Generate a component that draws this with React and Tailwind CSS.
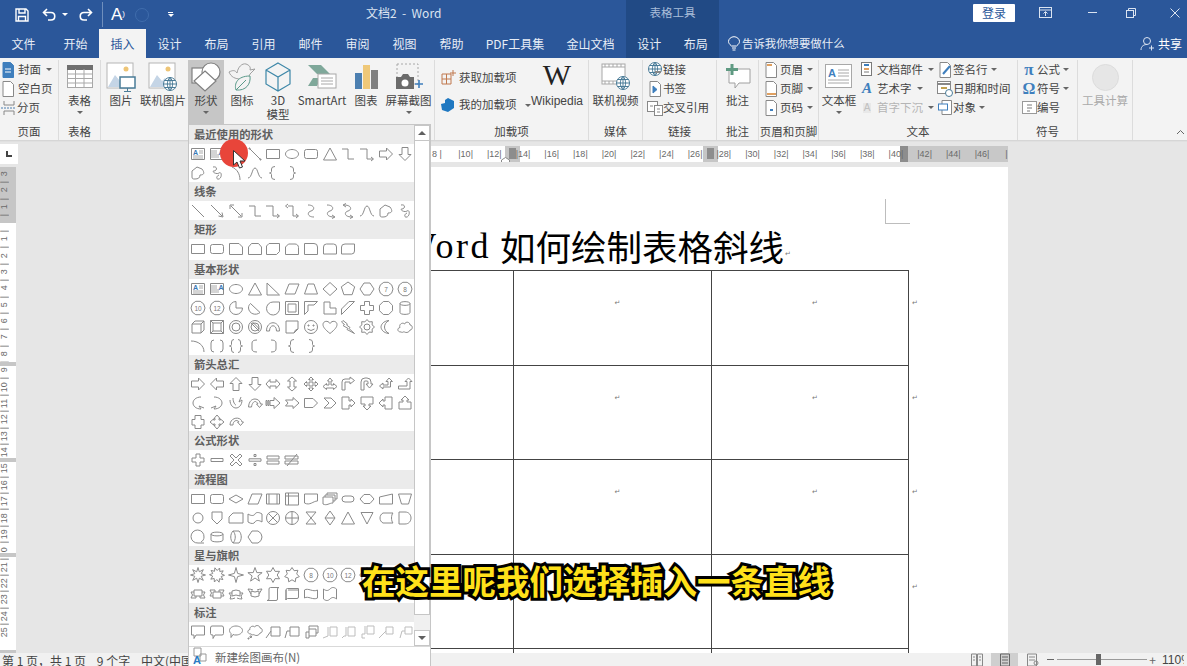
import React from 'react';

const pt = (n, ro, ri, rot = -90) => {
    const out = [];
    const count = ri ? n * 2 : n;
    for (let i = 0; i < count; i++) {
        const r = ri && i % 2 ? ri : ro;
        const a = ((rot + (360 / count) * i) * Math.PI) / 180;
        out.push(`${(8 + r * Math.cos(a)).toFixed(1)} ${(8 + r * Math.sin(a)).toFixed(1)}`);
    }
    return `M${out.join('L')}Z`;
};

const CIRCLE = 'M14.5 8A6.5 6.5 0 1 1 1.5 8A6.5 6.5 0 1 1 14.5 8Z';
const RECT = 'M1.5 3.5H14.5V12.5H1.5Z';

const S = {
    line: 'M2 2L14 14',
    arrow: 'M2 2L13 13M9.5 13L14 14L13 9.5',
    dbl: 'M3 3L13 13M2 6L2 2L6 2M10 14L14 14L14 10',
    dotline: 'M3 3L13 13M2 2h1v1h-1zM13 13h1v1h-1z',
    elbow: 'M2 3H8V13H14',
    elbowA: 'M1 3H8V13H14M12 11L14.5 13L12 15',
    elbowD: 'M4 3H9V13H14M4 1L1.5 3L4 5M12 11L14.5 13L12 15',
    curveC: 'M5 2C12 2 12 7 8 8C4 9 4 14 11 14',
    curveA: 'M5 2C12 2 12 7 8 8C4 9 4 14 12 14M10 12L13 14L10 15.5',
    curveD: 'M4 2C12 2 12 7 8 8C4 9 4 14 12 14M10 12L13 14L10 15.5M6 0.5L3 2L6 4',
    bell: 'M1 13C5 13 5 3 8 3S11 13 15 13',
    curve: 'M4 2C9 4 12 9 12 15',
    sCurve: 'M1 13C5 13 5 3 8 3S11 13 15 13',
    free: 'M2 12V6L7 2L12 4C15 8 14 10 10 10C10 13 8 14 5 14C3 14 2 14 2 12Z',
    scribble: 'M4 2C9 1 8 6 5 6S7 10 10 8S13 13 10 14S7 11 10 10',
    rect: RECT,
    round: 'M3.5 3.5H12.5Q14.5 3.5 14.5 5.5V10.5Q14.5 12.5 12.5 12.5H3.5Q1.5 12.5 1.5 10.5V5.5Q1.5 3.5 3.5 3.5Z',
    snip1: 'M1.5 2.5H11L14.5 6V13.5H1.5Z',
    snip2: 'M4.5 2.5H11.5L14.5 6V13.5H1.5V6Z',
    snipd: 'M4 2.5H14.5V10.5L11.5 13.5H1.5V5Z',
    sniprnd: 'M1.5 13.5V6L4.5 3H11C13 3 14.5 4.5 14.5 6.5V13.5Z',
    rnd1: 'M1.5 2.5H11Q14.5 2.5 14.5 6V13.5H1.5Z',
    rnd2: 'M4.5 3H11.5Q14.5 3 14.5 6V13H1.5V6Q1.5 3 4.5 3Z',
    rndd: 'M5 3H14.5V10Q14.5 13 11.5 13H1.5V6Q1.5 3 5 3Z',
    ellipse: 'M14.5 8C14.5 10.5 11.5 12.5 8 12.5S1.5 10.5 1.5 8S4.5 3.5 8 3.5S14.5 5.5 14.5 8Z',
    tri: 'M8 2L14.5 14H1.5Z',
    rtri: 'M2 2V14H14.5Z',
    para: 'M5 3H15L11 13H1Z',
    trap: 'M5 3H11L14.5 13H1.5Z',
    diamond: 'M8 1.5L15 8L8 14.5L1 8Z',
    pent: pt(5, 7),
    hex: 'M5 2H11L15 8L11 14H5L1 8Z',
    hept: pt(7, 7),
    oct: pt(8, 7, 0, -67.5),
    pie: 'M8 8V1.5A6.5 6.5 0 1 0 14.5 8Z',
    chord: 'M3.5 3.5L13 12.5C9 16 2 14 1.5 8C1.5 6 2 5 3.5 3.5Z',
    tear: 'M8 2H14.5V8A6.5 6.5 0 1 1 8 2Z',
    frame: 'M1.5 1.5H14.5V14.5H1.5ZM4 4H12V12H4Z',
    half: 'M1.5 1.5H14.5L11 5H5V11L1.5 14.5Z',
    lsh: 'M2 2H8V8H14V14H2Z',
    diag: 'M1.5 14.5V9L9 1.5H14.5Z',
    plus: 'M5.5 1.5H10.5V5.5H14.5V10.5H10.5V14.5H5.5V10.5H1.5V5.5H5.5Z',
    can: 'M3 3.5C3 1 13 1 13 3.5V12.5C13 15 3 15 3 12.5ZM3 3.5C3 6 13 6 13 3.5',
    cube: 'M2 5L5 2H14V11L11 14H2ZM2 5H11V14M11 5L14 2',
    bevel: 'M1.5 1.5H14.5V14.5H1.5ZM4 4H12V12H4ZM1.5 1.5L4 4M14.5 1.5L12 4M1.5 14.5L4 12M14.5 14.5L12 12',
    donut: `${CIRCLE}M12 8A4 4 0 1 1 4 8A4 4 0 1 1 12 8Z`,
    nosmoke: `${CIRCLE}M12 8A4 4 0 1 1 4 8A4 4 0 1 1 12 8ZM4 4L12 12M5.5 3L13 10.5`,
    barc: 'M1.5 12C1.5 1 14.5 1 14.5 12H11.5C11.5 5 4.5 5 4.5 12Z',
    fold: 'M2 2H14V10L10 14H2ZM14 10Q11 10 10 14',
    smile: `${CIRCLE}M5 6h1v1h-1zM10 6h1v1h-1zM4.5 10Q8 13 11.5 10`,
    heart: 'M8 14.5C3 10.5 1 8 1 5.5C1 2 6 1 8 4.5C10 1 15 2 15 5.5C15 8 13 10.5 8 14.5Z',
    bolt: 'M3 1.5L7.5 5L6.5 6L10 8.5L9 9.5L14.5 14.5L7 10.5L8 9.5L3 6.5L4.5 5.5L1.5 3Z',
    sun: `${pt(8, 7.5, 5.5)}M11 8A3 3 0 1 1 5 8A3 3 0 1 1 11 8Z`,
    moon: 'M11 1.5C5 2 3 6 3 8S5 14 11 14.5C8 13 6.5 10.5 6.5 8S8 3 11 1.5Z',
    cloud: 'M4 13C0 13 0 9 3 8.5C1.5 5 6 3 7.5 5C9 2 13 3 13 6C16 6 16 11 13 11C12 14 8 14 7 12.5C6 13.5 5 13.5 4 13Z',
    arc: 'M1 3C8 3 14 7 14 14',
    dbrk: 'M5 2Q2 2 2 5V11Q2 14 5 14M11 2Q14 2 14 5V11Q14 14 11 14',
    dbrc: 'M6 1.5Q3.5 1.5 3.5 4V6.5Q3.5 8 1.5 8Q3.5 8 3.5 9.5V12Q3.5 14.5 6 14.5M10 1.5Q12.5 1.5 12.5 4V6.5Q12.5 8 14.5 8Q12.5 8 12.5 9.5V12Q12.5 14.5 10 14.5',
    lbrk: 'M10 2Q5 2 5 5V11Q5 14 10 14',
    rbrk: 'M6 2Q11 2 11 5V11Q11 14 6 14',
    lbrc: 'M10 1.5Q6.5 1.5 6.5 4V6.5Q6.5 8 4.5 8Q6.5 8 6.5 9.5V12Q6.5 14.5 10 14.5',
    rbrc: 'M6 1.5Q9.5 1.5 9.5 4V6.5Q9.5 8 11.5 8Q9.5 8 9.5 9.5V12Q9.5 14.5 6 14.5',
    right: 'M1.5 5H8.5V2L14.5 8L8.5 14V11H1.5Z',
    left: 'M14.5 5H7.5V2L1.5 8L7.5 14V11H14.5Z',
    up: 'M5 14.5V7.5H2L8 1.5L14 7.5H11V14.5Z',
    down: 'M5 1.5V8.5H2L8 14.5L14 8.5H11V1.5Z',
    lr: 'M1 8L5 3.5V6H11V3.5L15 8L11 12.5V10H5V12.5Z',
    ud: 'M8 1L12.5 5H10V11H12.5L8 15L3.5 11H6V5H3.5Z',
    quad: 'M8 1L10.5 3.5H9V7H12.5V5.5L15 8L12.5 10.5V9H9V12.5H10.5L8 15L5.5 12.5H7V9H3.5V10.5L1 8L3.5 5.5V7H7V3.5H5.5Z',
    lru: 'M8 2L10.5 5H9V9H11.5V7.5L15 10.5L11.5 13.5V12H4.5V13.5L1 10.5L4.5 7.5V9H7V5H5.5Z',
    bent: 'M2 14V6Q2 3 5 3H10V1L14.5 4.5L10 8V6H5V14Z',
    uturn: 'M2 14V6Q2 2 6 2H8Q12 2 12 6V8H14L10.5 12L7 8H9V6Q9 5 8 5H6Q5 5 5 6V14Z',
    lup: 'M11 2L14.5 5.5H12.5V11H5V13L1.5 10L5 7V9H10V5.5H8Z',
    bup: 'M11.5 2L15 5.5H13V13H1.5V10H10V5.5H8Z',
    cright: 'M11 2C6 2 3 5 3 8S6 14 11 14L9 11L14 13',
    cleft: 'M5 2C10 2 13 5 13 8S10 14 5 14L7 11L2 13',
    cup: 'M2 5C2 10 5 13 8 13S14 10 14 5L11 7L13 2M5 3C5 7 7 10 8 10',
    cdown: 'M1.5 12C2 6 5 4 8 4S13 6 13.5 9H15.5L12.5 12.5L9.5 9H11C10 7 9 6.5 8 6.5S5 8 4.5 12Z',
    stripe: 'M1 5.5H2V10.5H1ZM3 5.5H4V10.5H3ZM5 5.5H9V2.5L15 8L9 13.5V10.5H5Z',
    notch: 'M1.5 5H9V2.5L15 8L9 13.5V11H1.5L4 8Z',
    home: 'M1.5 3.5H10L14.5 8L10 12.5H1.5Z',
    chev: 'M2 3H9L14 8L9 13H2L7 8Z',
    rcall: 'M2 2H9V6H11V4L15 8L11 12V10H9V14H2Z',
    dcall: 'M2 2H14V9H10V11H12L8 15L4 11H6V9H2Z',
    lcall: 'M14 2H7V6H5V4L1 8L5 12V10H7V14H14Z',
    ucall: 'M2 14H14V7H10V5H12L8 1L4 5H6V7H2Z',
    lrcall: 'M5 1.5H11V5.5H14V11H11V14.5H5V11H2V5.5H5Z',
    qcall: 'M8 1L11 4.5H10V6H11.5V5L15 8L11.5 11V10H10V11.5H11L8 15L5 11.5H6V10H4.5V11L1 8L4.5 5V6H6V4.5H5Z',
    circ: 'M2 11C2 3 13 2 14 8H15.5L12.5 11.5L9.5 8H11C10 5.5 5 6 5 11Z',
    add: 'M6 2H10V6H14V10H10V14H6V10H2V6H6Z',
    minus: 'M2 6.5H14V9.5H2Z',
    mult: 'M4 2L8 6L12 2L14 4L10 8L14 12L12 14L8 10L4 14L2 12L6 8L2 4Z',
    div: 'M2 6.8H14V9.2H2ZM7 2.5H9V4.5H7ZM7 11.5H9V13.5H7Z',
    eq: 'M2 4H14V7H2ZM2 9H14V12H2Z',
    neq: 'M1 4H14V7H1ZM1 9H14V12H1ZM3 14L13 2',
    flat: 'M1 8L8 4L15 8L8 12Z',
    pred: 'M1.5 3H14.5V13H1.5ZM4 3V13M12 3V13',
    intern: 'M1.5 2H14.5V14H1.5ZM1.5 5H14.5M4.5 2V14',
    doc: 'M1.5 3H14.5V10C10 10 7 15 1.5 12Z',
    mdoc: 'M1 6H11V12C7 12 5 15 1 13ZM3 6V4H13V10H11M5 4V2H15V8H13',
    term: 'M5 5H11A3 3 0 0 1 11 11H5A3 3 0 0 1 5 5Z',
    prep: 'M5 3.5H11L15 8L11 12.5H5L1 8Z',
    minput: 'M1.5 6L14.5 3V13H1.5Z',
    mop: 'M1.5 3H14.5L11.5 13H4.5Z',
    conn: 'M13 8A5 5 0 1 1 3 8A5 5 0 1 1 13 8Z',
    off: 'M3 2H13V9L8 14L3 9Z',
    card: 'M5 3H15V13H1V7Z',
    tape: 'M1 4C4 6 7 6 8 4S12 2 15 4V12C12 10 9 10 8 12S4 14 1 12Z',
    sum: `${CIRCLE}M3.4 3.4L12.6 12.6M12.6 3.4L3.4 12.6`,
    or: `${CIRCLE}M8 1.5V14.5M1.5 8H14.5`,
    coll: 'M3 2H13L3 14H13Z',
    sort: 'M8 1L13 8L8 15L3 8ZM3 8H13',
    tridn: 'M2 2.5H14L8 14Z',
    stored: 'M5 3H15C13 5 13 11 15 13H5C1 11 1 5 5 3Z',
    delay: 'M2 2H8C16 2 16 14 8 14H2Z',
    seq: 'M14 14H8A6.5 6.5 0 1 1 14 8C14 10 13 12 11 13',
    disk: 'M2 5C2 2.5 14 2.5 14 5V11C14 13.5 2 13.5 2 11ZM2 5C2 7.5 14 7.5 14 5',
    direct: 'M5 2H11C14 5 14 11 11 14H5C2 11 2 5 5 2ZM5 2C8 5 8 11 5 14',
    display: 'M5 2H11Q15 4 15 8T11 14H5L1 8Z',
    exp1: pt(8, 7.5, 3.5),
    exp2: pt(10, 7.5, 4.5, -70),
    s4: pt(4, 7.5, 2.2),
    s5: pt(5, 7.5, 3),
    s6: pt(6, 7.5, 4.2),
    s7: pt(7, 7.5, 4.8),
    s8: pt(8, 7.5, 5.5),
    rib1: 'M4 4H12V10H4ZM4 6H1L2.5 9L1 12H6V10M12 6H15L13.5 9L15 12H10V10',
    rib2: 'M4 6H12V12H4ZM4 10H1L2.5 7L1 4H6V6M12 10H15L13.5 7L15 4H10V6',
    crib1: 'M4 5Q8 3 12 5V10Q8 8 4 10ZM4 7H1L3 10L2 13Q5 13 7 12M12 7H15L13 10L14 13Q11 13 9 12',
    crib2: 'M4 10Q8 12 12 10V5Q8 7 4 5ZM4 8L1 3Q4 3 6 4M12 8L15 3Q12 3 10 4',
    vscr: 'M4 3Q4 1.5 5.5 1.5H14Q12.5 1.5 12.5 3V13Q12.5 14.5 11 14.5H2Q4 14.5 4 13Z',
    hscr: 'M2 4Q2 2.5 3.5 2.5H14.5V11Q14.5 12.5 13 12.5H3.5Q2 12.5 2 14ZM2 4V14M4 4H14.5',
    wave: 'M1.5 4C5 1.5 10 6.5 14.5 4V12C10 14.5 5 9.5 1.5 12Z',
    dwave: 'M1.5 3C4 5 6 5 8 3S12 1 14.5 3V13C12 11 10 11 8 13S4 15 1.5 13Z',
    c1: 'M1.5 2H14.5V11H6L4 14.5V11H1.5Z',
    c2: 'M3 2H13Q14.5 2 14.5 4V9.5Q14.5 11 13 11H6L4 14.5V11H3Q1.5 11 1.5 9.5V4Q1.5 2 3 2Z',
    c3: 'M14.5 6.5C14.5 9 11.5 11 8 11C7 11 6 11 5 10.5L3 13.5V9.5C2 8.7 1.5 7.5 1.5 6.5C1.5 4 4.5 2 8 2S14.5 4 14.5 6.5Z',
    c4: 'M4 10C0 10 0 6 3 5.5C2 3 6 1 7.5 3C9 0.5 13 1.5 13 4C16 4 16 9 13 9C12 12 8 12 7 10.5C6 11 5 11 4 10ZM3 12h1.5v1.5h-1.5zM1 14h1v1h-1z',
    l1: 'M6 3H15V12H6ZM6 7L1 14',
    l2: 'M6 3H15V12H6ZM6 7H3L1 14',
    l3: 'M6 5H13V12H6ZM6 5V2H15V9H13M6 12V14H3V8H6',
    l4: 'M8 3H15V12H8ZM6 3V12L1 14',
    l5: 'M8 3H15V12H8ZM6 3V12H4L2 14',
    l6: 'M8 2H15V10H8ZM6 2V10H3V14H6',
    l7: 'M8 3H15V10H8ZM8 7L1 14',
    l8: 'M8 3H15V10H8ZM8 7H5L3 14',
};

const FADED = ['l4', 'l5', 'l6', 'l7', 'l8'];

function Shape({ name }) {
    if (name === 'tb' || name === 'vtb') {
        return (
            <svg width="16" height="16" viewBox="0 0 16 16" fill="none" stroke="#8a8a8a">
                <path d="M1.5 2.5H14.5V13.5H1.5Z" />
                {name === 'tb' ? (
                    <path d="M9 5H13M9 7H13M3 10H13M3 12H13" stroke="#aaaaaa" />
                ) : (
                    <path d="M3 4V12M5 4V12M7 4V12M9 8V12" stroke="#aaaaaa" />
                )}
                <text x={name === 'tb' ? 3 : 9.5} y="8.5" fontSize="7" fontWeight="700" fill="#3b78b5" stroke="none" fontFamily="Liberation Sans">A</text>
            </svg>
        );
    }
    if (/^n\d+$/.test(name)) {
        return (
            <svg width="16" height="16" viewBox="0 0 16 16" fill="none" stroke="#8a8a8a">
                <path d={pt(10, 7, 0, -72)} />
                <text x="8" y="10.5" fontSize="6.5" textAnchor="middle" fill="#777777" stroke="none" fontFamily="Liberation Sans">{name.slice(1)}</text>
            </svg>
        );
    }
    return (
        <svg width="16" height="16" viewBox="0 0 16 16" fill="none" stroke={FADED.includes(name) ? '#bdbdbd' : '#8a8a8a'} strokeWidth="1">
            <path d={S[name]} />
        </svg>
    );
}

const SECTIONS = [
    { title: '最近使用的形状', rows: ['tb vtb line dotline rect ellipse round tri elbow elbowA right down', 'free scribble curve sCurve lbrc rbrc'], extra: '' },
    { title: '线条', rows: ['line arrow dbl elbow elbowA elbowD curveC curveA curveD bell free scribble'], extra: '' },
    { title: '矩形', rows: ['rect round snip1 snip2 snipd sniprnd rnd1 rnd2 rndd'], extra: 'pb-[2px]' },
    { title: '基本形状', rows: ['tb vtb ellipse tri rtri para trap diamond pent hex n7 n8', 'n10 n12 pie chord tear frame half lsh diag plus oct can', 'cube bevel donut nosmoke barc fold smile heart bolt sun moon cloud', 'arc dbrk dbrc lbrk rbrk lbrc rbrc'], extra: '' },
    { title: '箭头总汇', rows: ['right left up down lr ud quad lru bent uturn lup bup', 'cright cleft cup cdown stripe notch home chev rcall dcall lcall ucall', 'lrcall qcall circ'], extra: '' },
    { title: '公式形状', rows: ['add minus mult div eq neq'], extra: 'pb-[1px]' },
    { title: '流程图', rows: ['rect round flat para pred intern doc mdoc term prep minput mop', 'conn off card tape sum or coll sort tri tridn stored delay', 'seq disk direct display'], extra: '' },
    { title: '星与旗帜', rows: ['exp1 exp2 s4 s5 s6 s7 n8 n10 n12 s8', 'rib1 rib2 crib1 crib2 vscr hscr wave dwave'], extra: '' },
    { title: '标注', rows: ['c1 c2 c3 c4 l1 l2 l3 l4 l5 l6 l7 l8'], extra: '' },
];

function ShapesMenu() {
    return (
        <div className="absolute left-[188px] top-[124px] w-[243px] h-[542px] bg-white border-l border-t border-r border-[#c6c6c6] flex flex-col z-20">
            <div className="flex h-[521px]">
                <div className="w-[226px]">
                    {SECTIONS.map((sec) => (
                        <div key={sec.title} className={sec.extra}>
                            <div className="h-[19px] bg-[#ebebeb] pl-[5px] text-[11.3px] leading-[18px] font-bold text-[#5f5f5f]">{sec.title}</div>
                            {sec.rows.map((row, i) => (
                                <div key={i} className="flex h-[19px]">
                                    {row.split(' ').map((n, j) => (
                                        <div key={j} className="w-[18.75px] h-[19px] flex items-center justify-center">
                                            <Shape name={n} />
                                        </div>
                                    ))}
                                </div>
                            ))}
                        </div>
                    ))}
                </div>
                <div className="w-[16px] flex flex-col bg-[#f0f0f0]">
                    <div className="h-[16px] bg-white border border-[#c6c6c6] flex items-center justify-center">
                        <div className="w-0 h-0 border-l-[4px] border-r-[4px] border-b-[4px] border-l-transparent border-r-transparent border-b-[#606060]" />
                    </div>
                    <div className="h-[474px] bg-white border-x border-b border-[#c6c6c6]" />
                    <div className="flex-1" />
                    <div className="h-[16px] bg-white border border-[#c6c6c6] flex items-center justify-center">
                        <div className="w-0 h-0 border-l-[4px] border-r-[4px] border-t-[4px] border-l-transparent border-r-transparent border-t-[#606060]" />
                    </div>
                </div>
            </div>
            <div className="flex-1 border-t border-[#d9d9d9] flex items-center pl-[3px] gap-[7px] bg-white">
                <svg width="16" height="18" viewBox="0 0 16 18" fill="none">
                    <path d="M2 1H9V9H2Z" stroke="#999999" />
                    <path d="M8 7H14V14H8Z" stroke="#999999" />
                    <text x="1" y="17" fontSize="11" fontWeight="700" fill="#2b7cc4" fontFamily="Liberation Sans">A</text>
                </svg>
                <span className="text-[11.5px] text-[#666666] mt-[2px]">新建绘图画布(N)</span>
            </div>
        </div>
    );
}

const Caret = ({ c = '#666666' }) => (
    <span className="inline-block w-0 h-0 border-l-[3px] border-r-[3px] border-t-[3px] border-l-transparent border-r-transparent" style={{ borderTopColor: c }} />
);

function Group({ w, label, children }) {
    return (
        <div className={`${w} h-[80px] mt-[2px] border-r border-[#dcdcdc] flex flex-col shrink-0`}>
            <div className="h-[64px] flex">{children}</div>
            <div className="h-[15px] text-center text-[11.5px] leading-[15px] whitespace-nowrap text-[#444444]">{label}</div>
        </div>
    );
}

function Big({ w, icon, children, caret, active, gray }) {
    return (
        <div className={`${w} h-[64px] pt-[1px] flex flex-col items-center shrink-0 text-[11.5px] leading-[14px] ${gray ? 'text-[#aaaaaa]' : 'text-[#444444]'} ${active ? 'bg-[#c6c6c6]' : ''}`}>
            <div className="h-[32px] flex items-center justify-center">{icon}</div>
            <div className="text-center whitespace-nowrap">{children}</div>
            {caret && <div className="mt-[4px] leading-[3px] flex"><Caret /></div>}
        </div>
    );
}

function Small({ icon, children, caret, gray, gap = 'gap-[3px]' }) {
    return (
        <div className={`h-[19px] flex items-center ${gap} whitespace-nowrap text-[11.5px] ${gray ? 'text-[#b5b5b5]' : 'text-[#444444]'}`}>
            <span className="w-[16px] h-[16px] flex items-center justify-center shrink-0">{icon}</span>
            <span>{children}</span>
            {caret && <span className="ml-[3px] flex"><Caret /></span>}
        </div>
    );
}

const Page = ({ fill = '#ffffff', stroke = '#888888', children }) => (
    <svg width="14" height="16" viewBox="0 0 14 16" fill={fill} stroke={stroke}>
        <path d="M2 .5H9.5L12.5 3.5V15.5H2Z" />
        {children}
    </svg>
);

const Picture = ({ children }) => (
    <svg width="30" height="30" viewBox="0 0 30 30">
        <rect x="1" y="1" width="26" height="25" fill="#ffffff" stroke="#b5b5b5" />
        <circle cx="20" cy="7" r="2.5" fill="#eec576" />
        <path d="M2 25L9 13L14 19L17 16L22 25Z" fill="#c5d5e6" />
        {children}
    </svg>
);

const Globe = ({ x = 0, y = 0 }) => (
    <g transform={`translate(${x} ${y})`} fill="#ffffff" stroke="#4a7c98">
        <circle cx="7" cy="7" r="6.5" />
        <path d="M.5 7H13.5M1.5 3.5H12.5M1.5 10.5H12.5M7 .5V13.5M7 .5C3.5 4 3.5 10 7 13.5M7 .5C10.5 4 10.5 10 7 13.5" fill="none" />
    </g>
);

function Ribbon() {
    return (
        <div className="h-[83px] bg-[#f3f3f3] border-b border-[#d6d6d6] flex relative">
            <Group w="w-[59px]" label="页面">
                <div className="flex flex-col">
                    <Small gap="gap-[2px]" caret icon={<Page fill="#3f7fbd" stroke="#3f7fbd"><path d="M4 7H10M4 10H10" stroke="#ffffff" /></Page>}>封面</Small>
                    <Small gap="gap-[2px]" icon={<Page />}>空白页</Small>
                    <Small gap="gap-[1px]" icon={
                        <svg width="16" height="16" viewBox="0 0 16 16" fill="none" stroke="#888888"><path d="M4 1V5H14V1M4 15V11H14V15" /><path d="M1 8H15" stroke="#4a7cae" strokeDasharray="2 1" /></svg>
                    }>分页</Small>
                </div>
            </Group>
            <Group w="w-[42px]" label="表格">
                <Big w="w-[41px]" caret icon={
                    <svg width="26" height="24" viewBox="0 0 26 24" fill="#ffffff" stroke="#a8a8a8">
                        <rect x=".5" y=".5" width="25" height="22" />
                        <rect x=".5" y=".5" width="25" height="4" fill="#6f6f6f" stroke="#6f6f6f" />
                        <path d="M.5 9H25.5M.5 13.5H25.5M.5 18H25.5M8.5 4V22M17 4V22" fill="none" />
                    </svg>
                }>表格</Big>
            </Group>
            <Group w="w-[334px]" label="插图">
                <div className="w-[3px]" />
                <Big w="w-[34px]" icon={<Picture><rect x="14" y="15" width="15" height="11" fill="#ffffff" stroke="#4a7c98" strokeWidth="1.5" /><path d="M21.5 26V29M18 29.5H25" stroke="#4a7c98" /></Picture>}>图片</Big>
                <Big w="w-[50px]" icon={<Picture><Globe x="15" y="15" /></Picture>}>联机图片</Big>
                <Big w="w-[36px]" active caret icon={
                    <svg width="30" height="30" viewBox="0 0 30 30" fill="#ffffff" stroke="#808080" strokeWidth="1.2">
                        <rect x="1" y="6" width="17" height="15" />
                        <circle cx="20" cy="10" r="9" />
                        <path d="M14 9L25 19L14 29L3 19Z" />
                    </svg>
                }>形状</Big>
                <Big w="w-[36px]" icon={
                    <svg width="28" height="30" viewBox="0 0 28 30" fill="none" stroke="#a0a0a0">
                        <path d="M1 10C5 8 7 8 9 11C10 5 14 1 18 2C21 3 23 5 22 8L27 7L22 12C21 16 17 18 13 17C7 17 3 15 1 10Z" />
                        <path d="M8 28C6 22 9 14 22 14C23 22 18 29 8 28ZM8 28L18 18" fill="#f3f3f3" stroke="#5a9a8a" />
                    </svg>
                }>图标</Big>
                <Big w="w-[36px]" icon={
                    <svg width="26" height="30" viewBox="0 0 26 30" fill="none" stroke="#3d87a8" strokeWidth="1.2">
                        <path d="M13 1L25 8V22L13 29L1 22V8ZM1 8L13 15L25 8M13 15V29" />
                    </svg>
                }><div>3D</div><div>模型</div></Big>
                <Big w="w-[52px]" icon={
                    <svg width="30" height="26" viewBox="0 0 30 26">
                        <path d="M1 1H14L23 10H10Z" fill="#7fa89a" />
                        <path d="M1 22H10L14 14H6Z" fill="#7fa89a" />
                        <rect x="11" y="10" width="18" height="14" fill="#ffffff" stroke="#a8a8a8" />
                        <path d="M14 14H26M14 17H26M14 20H26" stroke="#a8a8a8" />
                    </svg>
                }>SmartArt</Big>
                <Big w="w-[36px]" icon={
                    <svg width="24" height="26" viewBox="0 0 24 26">
                        <rect x="1" y="9" width="7" height="16" fill="#4c7fb0" />
                        <rect x="9" y="1" width="7" height="24" fill="#efc878" />
                        <rect x="17" y="6" width="7" height="19" fill="#808080" />
                    </svg>
                }>图表</Big>
                <Big w="w-[49px]" caret icon={
                    <svg width="28" height="28" viewBox="0 0 28 28" fill="none">
                        <rect x="2" y="1" width="21" height="20" stroke="#a8a8a8" strokeDasharray="2 2" />
                        <path d="M1 14H6L8 11H13L15 14H19V26H1Z" fill="#6b6b6b" />
                        <circle cx="10" cy="20" r="3.5" fill="#ffffff" />
                        <path d="M24 17V25M20 21H28" stroke="#3f7fbd" strokeWidth="1.6" />
                    </svg>
                }>屏幕截图</Big>
            </Group>
            <Group w="w-[154px]" label="加载项">
                <div className="w-[92px] pl-[5px] pt-[8px] flex flex-col gap-[8px] shrink-0">
                    <Small icon={
                        <svg width="15" height="15" viewBox="0 0 15 15" fill="none" stroke="#c0794e"><path d="M1 4H10V14H1ZM1 9H10M5.5 4V14M12 0V6M9 3H15" /></svg>
                    }>获取加载项</Small>
                    <div className="flex items-center">
                        <Small icon={
                            <svg width="14" height="14" viewBox="0 0 14 14"><path d="M7 0L13 3V10L7 14L1 12L0 6L4 5L4 2Z" fill="#1f78c1" /></svg>
                        }>我的加载项</Small>
                        <span className="ml-[8px] mt-[2px] flex"><Caret /></span>
                    </div>
                </div>
                <Big w="w-[60px]" icon={<span className="text-[30px] leading-[28px] mb-[4px] text-[#222222] [font-family:'Liberation_Serif',serif]">W</span>}>
                    <span className="[font-family:'Liberation_Sans',sans-serif] text-[12px]">Wikipedia</span>
                </Big>
            </Group>
            <Group w="w-[54px]" label="媒体">
                <Big w="w-[53px]" icon={
                    <svg width="30" height="28" viewBox="0 0 30 28" fill="#ffffff" stroke="#a8a8a8">
                        <rect x="1" y="1" width="23" height="20" />
                        <path d="M1 4H24M1 18H24M4 1V4M8 1V4M12 1V4M16 1V4M20 1V4M4 18V21M8 18V21M12 18V21" fill="none" />
                        <Globe x="15" y="13" />
                    </svg>
                }>联机视频</Big>
            </Group>
            <Group w="w-[74px]" label="链接">
                <div className="pl-[4px] flex flex-col">
                    <Small gap="gap-0" icon={<svg width="15" height="15" viewBox="0 0 15 15"><Globe /><path d="M7 10H13" stroke="#888888" strokeWidth="2" /></svg>}>链接</Small>
                    <Small gap="gap-0" icon={<Page><path d="M5 5V12L9 8.5Z" fill="#3f7fbd" stroke="#3f7fbd" /></Page>}>书签</Small>
                    <Small gap="gap-0" icon={
                        <svg width="16" height="16" viewBox="0 0 16 16" fill="#ffffff" stroke="#888888"><rect x=".5" y="1.5" width="10" height="10" /><rect x="7.5" y="5.5" width="8" height="10" /><path d="M3 6H6M10 9H13M10 12H13" fill="none" /></svg>
                    }>交叉引用</Small>
                </div>
            </Group>
            <Group w="w-[42px]" label="批注">
                <Big w="w-[41px]" icon={
                    <svg width="28" height="28" viewBox="0 0 28 28" fill="none">
                        <path d="M5 6H26V20H15L11 25V20H5Z" fill="#ffffff" stroke="#a0a0a0" />
                        <path d="M8 1V12M2 6.5H14" stroke="#5f9a82" strokeWidth="3" />
                    </svg>
                }>批注</Big>
            </Group>
            <Group w="w-[60px]" label="页眉和页脚">
                <div className="pl-[4px] flex flex-col">
                    <Small gap="gap-[1px]" caret icon={<Page><path d="M3 3H8" stroke="#e0a060" strokeWidth="2" /></Page>}>页眉</Small>
                    <Small gap="gap-[1px]" caret icon={<Page><path d="M3 13H12" stroke="#e0a060" strokeWidth="2" /></Page>}>页脚</Small>
                    <Small gap="gap-[1px]" caret icon={<Page><path d="M6 10H9" stroke="#3f7fbd" strokeWidth="2" /></Page>}>页码</Small>
                </div>
            </Group>
            <Group w="w-[199px]" label="文本">
                <Big w="w-[40px]" caret icon={
                    <svg width="28" height="26" viewBox="0 0 28 26" fill="none">
                        <rect x=".5" y=".5" width="26" height="23" fill="#ffffff" stroke="#a8a8a8" />
                        <path d="M13 6H24M13 9H24M13 12H24M3 16H24M3 19H24" stroke="#a8a8a8" />
                        <text x="3" y="13" fontSize="11" fontWeight="700" fill="#3f7fbd" fontFamily="Liberation Sans">A</text>
                    </svg>
                }>文本框</Big>
                <div className="w-[78px] flex flex-col shrink-0">
                    <Small gap="gap-[2px]" caret icon={<svg width="12" height="15" viewBox="0 0 12 15" fill="#ffffff" stroke="#7a7a7a"><rect x=".5" y=".5" width="10" height="13" /><path d="M3 3H8" stroke="#3f7fbd" strokeWidth="2" /><path d="M3 7H8" stroke="#e0a060" strokeWidth="2" /><path d="M3 10H8" /></svg>}>文档部件</Small>
                    <Small gap="gap-[2px]" caret icon={<span className="text-[15px] italic leading-none font-bold text-[#3f7fbd] [font-family:'Liberation_Serif',serif]">A</span>}>艺术字</Small>
                    <Small gap="gap-[2px]" gray caret icon={<span className="text-[10px] leading-none text-[#c0c0c0] bg-[#e8e8e8] px-[1px] [font-family:'Liberation_Sans',sans-serif]">A</span>}>首字下沉</Small>
                </div>
                <div className="flex flex-col">
                    <Small gap="gap-0" caret icon={<Page><path d="M5 12L12 4" stroke="#3f7fbd" strokeWidth="2" /></Page>}>签名行 </Small>
                    <Small gap="gap-0" icon={<svg width="16" height="16" viewBox="0 0 16 16" fill="#ffffff" stroke="#888888"><rect x=".5" y=".5" width="13" height="12" /><path d="M1 3H13" strokeWidth="2" /><path d="M4 7H10" stroke="#c0a050" strokeWidth="2" /><circle cx="12" cy="12" r="3.5" stroke="#4a7c98" /></svg>}>日期和时间</Small>
                    <Small gap="gap-0" caret icon={<svg width="15" height="15" viewBox="0 0 15 15" fill="#ffffff" stroke="#888888"><path d="M4 .5H13.5V14.5H4Z" /><rect x=".5" y="4" width="9" height="6" stroke="#3f7fbd" /></svg>}>对象 </Small>
                </div>
            </Group>
            <Group w="w-[60px]" label="符号">
                <div className="pl-[3px] flex flex-col">
                    <Small gap="gap-0" caret icon={<span className="text-[17px] leading-none font-bold text-[#3f7fbd] [font-family:'Liberation_Serif',serif]">π</span>}>公式</Small>
                    <Small gap="gap-0" caret icon={<span className="text-[16px] leading-none font-bold text-[#3f7fbd] [font-family:'Liberation_Serif',serif]">Ω</span>}>符号</Small>
                    <Small gap="gap-0" icon={<svg width="15" height="13" viewBox="0 0 15 13" fill="#ffffff" stroke="#999999"><rect x=".5" y=".5" width="14" height="12" /><path d="M5 4H10M5 7H10M5 10H8" stroke="#7a7a7a" /></svg>}>编号</Small>
                </div>
            </Group>
            <Group w="w-[55px]" label="">
                <Big w="w-[54px]" gray icon={<span className="block w-[27px] h-[27px] rounded-full bg-[#e6e6e6] border border-[#dcdcdc]" />}>工具计算</Big>
            </Group>
            <svg className="absolute right-[2px] bottom-[5px]" width="9" height="6" viewBox="0 0 9 6" fill="none" stroke="#666666"><path d="M1 5L4.5 1.5L8 5" /></svg>
        </div>
    );
}

function TitleBar() {
    return (
        <div className="h-[29px] flex text-white">
            <div className="w-[626px] flex items-center relative">
                <div className="w-[366px] flex items-center">
                    <svg className="ml-[15px]" width="14" height="14" viewBox="0 0 14 14" fill="none" stroke="#ffffff" strokeWidth="1.4"><path d="M1 1H11L13 3V13H1Z" /><path d="M4 1V5H10V1M3.5 13V8.5H10.5V13" /></svg>
                    <svg className="ml-[13px]" width="15" height="14" viewBox="0 0 15 14" fill="none" stroke="#ffffff" strokeWidth="1.6"><path d="M5 1L1.5 4.5L5 8M2 4.5H9C14 4.5 14 12 9 12H6" /></svg>
                    <span className="ml-[5px] flex"><Caret c="#ffffff" /></span>
                    <svg className="ml-[10px]" width="15" height="14" viewBox="0 0 15 14" fill="none" stroke="#ffffff" strokeWidth="1.6"><path d="M10 1L13.5 4.5L10 8M13 4.5H6C1 4.5 1 12 6 12H9" /></svg>
                    <span className="ml-[9px] w-px h-[25px] bg-[#6f8fbd]" />
                    <span className="ml-[8px] text-[17px] leading-none [font-family:'Liberation_Sans',sans-serif]">A<sup className="text-[8px]">)</sup></span>
                    <span className="ml-[10px] w-[14px] h-[14px] rounded-full border border-[#3f6cac]" />
                    <span className="ml-[19px] w-[5px] h-[5px] flex flex-col items-center gap-[1px]"><span className="w-[5px] h-px bg-white" /><Caret c="#ffffff" /></span>
                </div>
                <span className="text-[12px] text-[#dbe4f1] whitespace-pre mb-[4px]">文档2  -  Word</span>
            </div>
            <div className="w-[93px] bg-[#214a85] text-[11.5px] text-[#a9bdd9] flex items-center justify-center pb-[4px]">表格工具</div>
            <div className="flex-1 flex items-center">
                <div className="ml-[254px] w-[42px] h-[18px] mb-[4px] bg-white rounded-[1px] text-[#2b579a] text-[12px] leading-[18px] text-center">登录</div>
                <svg className="ml-[24px] mb-[4px]" width="13" height="12" viewBox="0 0 13 12" fill="none" stroke="#dbe4f1"><rect x=".5" y=".5" width="12" height="10" /><path d="M1 3H12M6.5 9V5M4.5 6.5L6.5 4.5L8.5 6.5" /></svg>
                <span className="ml-[36px] mb-[4px] w-[9px] h-px bg-[#dbe4f1]" />
                <svg className="ml-[29px] mb-[4px]" width="10" height="10" viewBox="0 0 10 10" fill="none" stroke="#dbe4f1"><rect x=".5" y="2.5" width="7" height="7" /><path d="M2.5 2V.5H9.5V7.5H8" /></svg>
                <svg className="ml-[34px] mb-[4px]" width="10" height="10" viewBox="0 0 10 10" fill="none" stroke="#dbe4f1"><path d="M.5 .5L9.5 9.5M9.5 .5L.5 9.5" /></svg>
            </div>
        </div>
    );
}

const TABS = [
    ['文件', 'w-[47px]'], ['开始', 'w-[52px] pl-[5px]'], ['插入', 'w-[47px]'], ['设计', 'w-[47px]'], ['布局', 'w-[47px]'],
    ['引用', 'w-[47px]'], ['邮件', 'w-[47px]'], ['审阅', 'w-[47px]'], ['视图', 'w-[47px]'], ['帮助', 'w-[47px]'],
    ['PDF工具集', 'w-[80px]'], ['金山文档', 'w-[71px]'],
];

function TabBar() {
    return (
        <div className="h-[29px] flex text-[12px] text-[#e7edf6]">
            {TABS.map(([name, w]) => (
                <div key={name + w} className={`${w} text-center leading-[30px] ${name === '插入' ? 'bg-[#f3f3f3] text-[#2b579a]' : ''}`}>{name}</div>
            ))}
            <div className="w-[93px] bg-[#214a85] flex">
                <div className="flex-1 text-center leading-[30px]">设计</div>
                <div className="flex-1 text-center leading-[30px]">布局</div>
            </div>
            <div className="flex items-center ml-[9px] gap-[2px]">
                <svg width="12" height="15" viewBox="0 0 12 15" fill="none" stroke="#ffffff"><path d="M3.5 10C1 8 .5 6.5 .5 5.5C.5 3 3 .7 6 .7S11.5 3 11.5 5.5C11.5 6.5 11 8 8.5 10ZM4 12H8M4.5 14H7.5" /></svg>
                <span className="text-[11.4px]">告诉我你想要做什么</span>
            </div>
            <div className="flex-1 flex items-center justify-end pr-[5px] gap-[3px]">
                <svg width="15" height="15" viewBox="0 0 15 15" fill="none" stroke="#dbe4f1"><circle cx="7" cy="5" r="3.5" /><path d="M1 14C1 10 4 8.5 7 8.5M9 12H14M11.5 9.5V14.5" /></svg>
                <span className="text-white">共享</span>
            </div>
        </div>
    );
}

const RULER_NUMS = [8, 10, 12, 14, 16, 18, 20, 22, 24, 26, 28, 30, 32, 34, 36, 38, 40, 42, 44, 46];

function HRuler() {
    return (
        <div className="ml-[201px] w-[791px] h-[16px] mt-[4px] relative bg-[#c8c8c8] overflow-hidden">
            <div className="absolute left-[99px] top-0 bottom-0 w-[584px] bg-white" />
            <div className="absolute left-[288px] top-0 bottom-0 w-[15px] bg-[#c6c6c6]"><div className="w-[7px] h-[11px] mt-[2px] ml-[4px] bg-[#8d8d8d]" /></div>
            <div className="absolute left-[486px] top-0 bottom-0 w-[15px] bg-[#c6c6c6]"><div className="w-[7px] h-[11px] mt-[2px] ml-[4px] bg-[#8d8d8d]" /></div>
            <div className="absolute left-[683px] top-0 bottom-0 w-[8px] bg-[#8d8d8d]" />
            <svg className="absolute left-[284px] top-[11px]" width="9" height="5" viewBox="0 0 9 5" fill="#ffffff" stroke="#8a8a8a"><path d="M.5 5V3L4.5 .5L8.5 3V5" /></svg>
            <div className="relative flex pl-[205.6px] text-[9px] leading-[16px] text-[#6a6a6a] [font-family:'Liberation_Sans',sans-serif]">
                {RULER_NUMS.map((n) => (
                    <div key={n} className="w-[28.7px] shrink-0 text-center whitespace-pre">{n === 8 ? '8 |' : `|${n}|`}</div>
                ))}
                <div className="pl-[9px]">|</div>
            </div>
        </div>
    );
}

function VRulerItems({ items }) {
    return items.map((it, i) => (
        <div key={i} className="h-[8.2px] flex items-center justify-center text-[9px] leading-none text-[#6a6a6a] [font-family:'Liberation_Sans',sans-serif] [writing-mode:vertical-rl] rotate-180">
            {it}
        </div>
    ));
}

function VRuler() {
    const top = ['3', '|', '2', '|', '1', '|', ''];
    const nums = [];
    for (let n = 1; n <= 25; n++) {
        nums.push('|', n === 20 ? '0' : String(n));
    }
    return (
        <div className="w-[18px] shrink-0 relative">
            <div className="h-[20px] w-[18px] mt-[2px] bg-white flex items-center justify-center">
                <span className="w-[6px] h-[6px] border-l-2 border-b-2 border-[#444444]" />
            </div>
            <div className="w-[16px] mt-[3px] h-[56px] pt-[3px] bg-[#c6c6c6] overflow-hidden"><VRulerItems items={top} /></div>
            <div className="w-[16px] h-[431px] pt-[4px] bg-white overflow-hidden relative">
                <VRulerItems items={nums} />
                <div className="absolute left-0 right-0 top-[139px] h-[4px] bg-[#c6c6c6]" />
                <div className="absolute left-0 right-0 top-[235px] h-[4px] bg-[#c6c6c6]" />
                <div className="absolute left-0 right-0 top-[330px] h-[4px] bg-[#c6c6c6]" />
                <div className="absolute left-0 right-0 top-[427px] h-[4px] bg-[#c6c6c6]" />
            </div>
        </div>
    );
}

const Mark = ({ className = '' }) => (
    <span className={`text-[7px] leading-none text-[#777777] [font-family:'DejaVu_Sans',sans-serif] ${className}`}>↵</span>
);

function Doc() {
    const rows = [0, 1, 2, 3, 4];
    return (
        <div className="ml-[199px] w-[791px] flex-1 bg-white overflow-hidden">
            <div className="h-[32px]" />
            <div className="flex justify-end pr-[98px]">
                <div className="w-[25px] h-[25px] border-l border-b border-[#bdbdbd]" />
            </div>
            <div className="h-[46px] pl-[185px] pb-[3px] flex items-center whitespace-nowrap text-black">
                <span className="text-[36px] tracking-[2.5px] [font-family:'Liberation_Serif',serif]">Word</span>
                <span className="text-[35.5px] ml-[9px] [font-family:'Noto_Sans_CJK_SC',sans-serif]">如何绘制表格斜线</span>
                <Mark className="mt-[18px] ml-[1px]" />
            </div>
            <div className="ml-[98px]">
                {rows.map((r) => (
                    <div key={r} className="flex h-[94.5px]">
                        <div className="w-[198px] border-t border-l border-[#444444]" />
                        <div className="w-[198px] border-t border-l border-[#444444] flex justify-center pt-[29px] pl-[10px]"><Mark /></div>
                        <div className="w-[198px] border-t border-l border-r border-[#444444] flex justify-center pt-[29px] pl-[10px]"><Mark /></div>
                        <div className="pl-[3px] pt-[30px] flex"><Mark /></div>
                    </div>
                ))}
            </div>
        </div>
    );
}

function StatusBar() {
    return (
        <div className="h-[13px] bg-[#f1f1f1] flex items-center overflow-hidden text-[12px] text-[#444444] relative">
            <span className="pl-[2px] whitespace-pre mt-[2px]">第 1 页，共 1 页    9 个字    中文(中国)</span>
            <div className="ml-auto flex items-center h-full pr-[3px]">
                <svg width="12" height="13" viewBox="0 0 12 13" fill="none" stroke="#888888"><path d="M.5 1H5.5V13H.5ZM6.5 1H11.5V13H6.5ZM2 4H4M2 7H4M8 4H10M8 7H10" /></svg>
                <div className="ml-[8px] w-[27px] h-full bg-[#cfcfcf] flex items-center justify-center">
                    <svg width="10" height="13" viewBox="0 0 10 13" fill="none" stroke="#666666"><path d="M.5 1H9.5V13H.5ZM2 4H8M2 7H8M2 10H8" /></svg>
                </div>
                <svg className="ml-[9px]" width="12" height="13" viewBox="0 0 12 13" fill="none" stroke="#888888"><path d="M.5 1H9.5V13H.5ZM2 4H8M2 7H8" /><circle cx="9" cy="10" r="2" /></svg>
                <span className="ml-[8px] w-[7px] h-px bg-[#666666]" />
                <div className="ml-[3px] w-[90px] h-px bg-[#9a9a9a] relative">
                    <span className="absolute left-[39px] top-[-5px] w-[5px] h-[11px] bg-[#666666]" />
                </div>
                <span className="ml-[2px] text-[#666666]">+</span>
                <span className="ml-[6px] [font-family:'Liberation_Sans',sans-serif] whitespace-nowrap w-[22px] overflow-hidden">110%</span>
            </div>
        </div>
    );
}

export default function App() {
    return (
        <div className="w-[1187px] h-[666px] relative overflow-hidden flex flex-col bg-[#e6e6e6] [font-family:'Noto_Sans_CJK_SC','Noto_Sans',sans-serif]">
            <div className="bg-[#2b579a]">
                <TitleBar />
                <TabBar />
            </div>
            <Ribbon />
            <div className="h-[512px] flex overflow-hidden border-t border-[#e0e0e0]">
                <VRuler />
                <div className="flex-1 flex flex-col min-w-0">
                    <div className="h-[25px]"><div className="-ml-[2px]"><HRuler /></div></div>
                    <Doc />
                </div>
            </div>
            <StatusBar />
            <ShapesMenu />
            {/* mouse highlight */}
            <div className="absolute left-[220px] top-[139px] w-[28px] h-[28px] rounded-full bg-[#e8453a] z-30" />
            <svg className="absolute left-[233px] top-[150px] z-30" width="13" height="19" viewBox="0 0 13 19" fill="#ffffff" stroke="#333333">
                <path d="M.5 .5V15L4 12L6.5 18L9.5 17L7 11H12Z" />
            </svg>
            <div className="absolute left-[362px] top-[559px] z-30 text-[33.5px] leading-[42px] font-bold text-[#ffe11a] whitespace-nowrap [-webkit-text-stroke:6px_#000000] [paint-order:stroke_fill]">
                在这里呢我们选择插入一条直线
            </div>
        </div>
    );
}
